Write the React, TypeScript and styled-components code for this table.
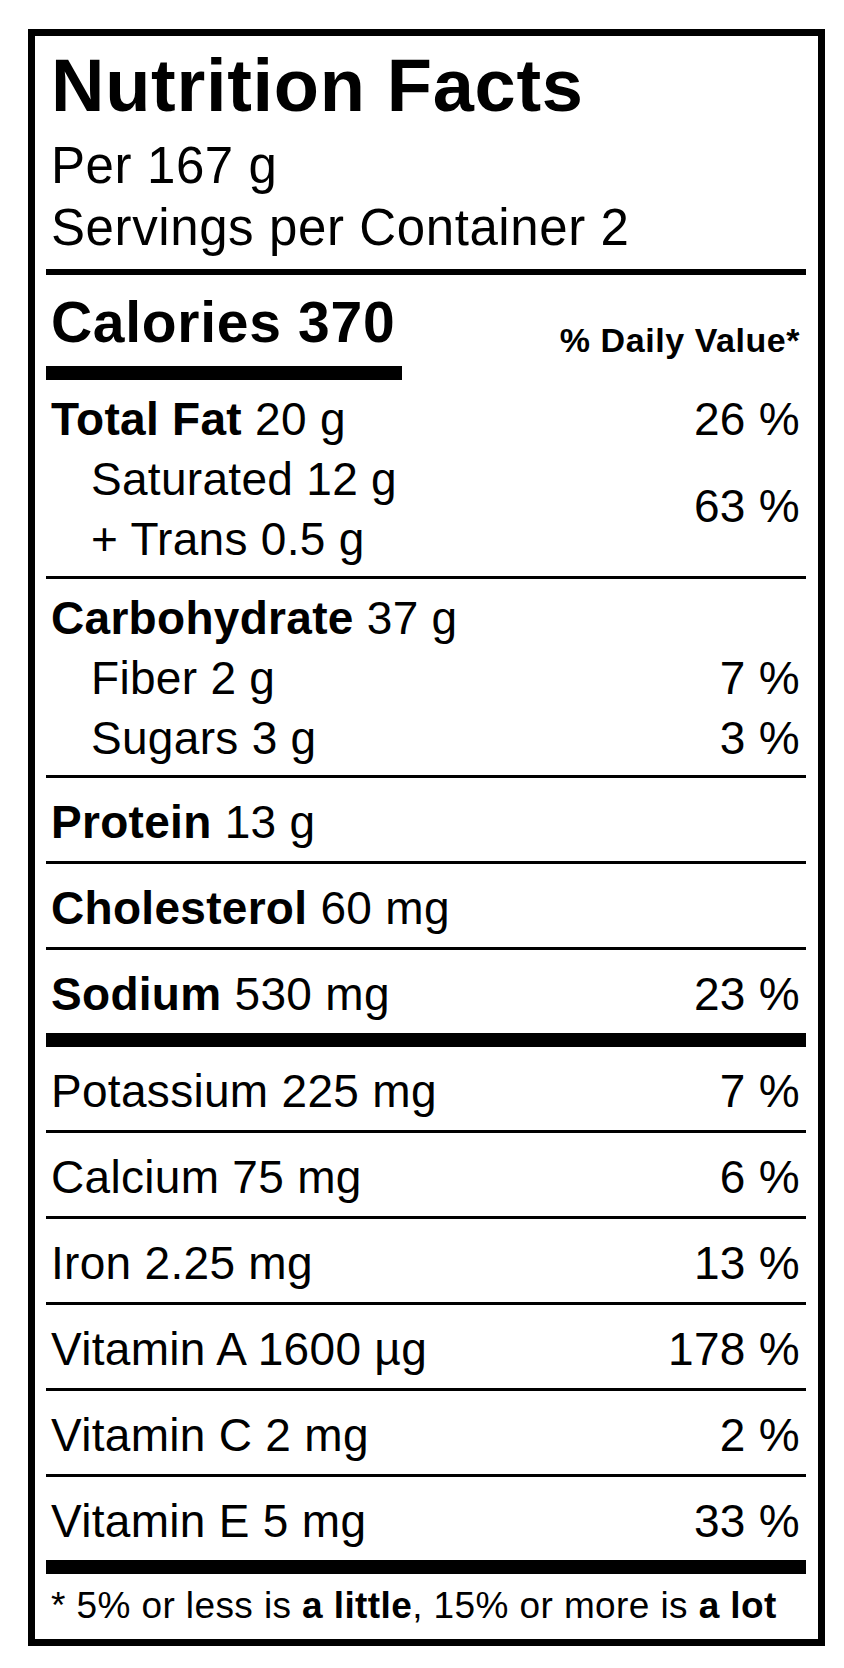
import React from "react";
import styled, { createGlobalStyle } from "styled-components";

const GlobalStyle = createGlobalStyle`
  html, body { margin: 0; padding: 0; background: #fff; }
  body {
    font-family: "Liberation Sans", Arial, Helvetica, sans-serif;
    color: #000;
  }
`;

const Page = styled.div`
  padding: 29px 0 22px 28px;
`;

const Label = styled.section`
  box-sizing: border-box;
  width: 797px;
  border: 7px solid #000;
  padding: 0 12px 0 11px;
`;

const Header = styled.header`
  padding: 13px 0 10px 5px;
`;

const Title = styled.h1`
  margin: 0 0 12px;
  font-size: 74px;
  line-height: 74px;
  font-weight: 700;
  letter-spacing: 0.7px;
`;

const HeaderLine = styled.div`
  font-size: 51px;
  line-height: 62px;
  letter-spacing: 0.6px;
`;

const Divider = styled.div<{ $h: number }>`
  height: ${(p) => p.$h}px;
  background: #000;
`;

const CaloriesSection = styled.div`
  display: flex;
  justify-content: space-between;
  align-items: flex-start;
  padding: 15px 6px 0 0;
`;

const CaloriesBlock = styled.div`
  display: flex;
  flex-direction: column;
`;

const CaloriesText = styled.div`
  padding-left: 5px;
  font-size: 57px;
  line-height: 64px;
  font-weight: 700;
  letter-spacing: 0.7px;
`;

const CaloriesBar = styled.div`
  width: 356px;
  height: 14px;
  margin-top: 12px;
  background: #000;
`;

const DailyValue = styled.div`
  margin-top: 33px;
  font-size: 34px;
  line-height: 34px;
  font-weight: 700;
  letter-spacing: 0.55px;
`;

const Group = styled.div<{ $top: number }>`
  display: grid;
  grid-template-columns: 1fr auto;
  grid-auto-rows: 60px;
  padding: ${(p) => p.$top}px 6px 7px 5px;
  font-size: 46px;
  line-height: 60px;
  letter-spacing: 0.3px;
`;

const GroupName = styled.div<{ $indent?: boolean }>`
  grid-column: 1;
  padding-left: ${(p) => (p.$indent ? 40 : 0)}px;
  white-space: nowrap;
`;

const GroupValue = styled.div<{ $span?: number }>`
  grid-column: 2;
  text-align: right;
  white-space: nowrap;
  ${(p) =>
    p.$span
      ? `grid-row: span ${p.$span}; align-self: center; padding-bottom: 6px;`
      : ""}
`;

const Row = styled.div`
  box-sizing: border-box;
  display: flex;
  justify-content: space-between;
  height: 83px;
  padding: 5px 6px 0 5px;
  font-size: 46px;
  line-height: 78px;
  letter-spacing: 0.3px;
  white-space: nowrap;
`;

const Bold = styled.b`
  font-weight: 700;
`;

const Footnote = styled.p`
  margin: 0;
  padding: 10px 0 11px 5px;
  font-size: 37px;
  line-height: 44px;
  letter-spacing: 0.4px;
  white-space: nowrap;
`;

type Nutrient = { name: string; amount: string; dv?: string; bold?: boolean };

const mainRows: Nutrient[] = [
  { name: "Protein", amount: "13 g", bold: true },
  { name: "Cholesterol", amount: "60 mg", bold: true },
  { name: "Sodium", amount: "530 mg", dv: "23 %", bold: true },
];

const minerals: Nutrient[] = [
  { name: "Potassium", amount: "225 mg", dv: "7 %" },
  { name: "Calcium", amount: "75 mg", dv: "6 %" },
  { name: "Iron", amount: "2.25 mg", dv: "13 %" },
  { name: "Vitamin A", amount: "1600 µg", dv: "178 %" },
  { name: "Vitamin C", amount: "2 mg", dv: "2 %" },
  { name: "Vitamin E", amount: "5 mg", dv: "33 %" },
];

const NutrientRow = ({ n }: { n: Nutrient }) => (
  <Row>
    <span>
      {n.bold ? <Bold>{n.name}</Bold> : n.name} {n.amount}
    </span>
    <span>{n.dv ?? ""}</span>
  </Row>
);

export default function App() {
  return (
    <>
      <GlobalStyle />
      <Page>
        <Label>
          <Header>
            <Title>Nutrition Facts</Title>
            <HeaderLine>Per 167 g</HeaderLine>
            <HeaderLine>Servings per Container 2</HeaderLine>
          </Header>
          <Divider $h={6} />
          <CaloriesSection>
            <CaloriesBlock>
              <CaloriesText>Calories 370</CaloriesText>
              <CaloriesBar />
            </CaloriesBlock>
            <DailyValue>% Daily Value*</DailyValue>
          </CaloriesSection>

          <Group $top={9}>
            <GroupName>
              <Bold>Total Fat</Bold> 20 g
            </GroupName>
            <GroupValue>26 %</GroupValue>
            <GroupName $indent>Saturated 12 g</GroupName>
            <GroupValue $span={2}>63 %</GroupValue>
            <GroupName $indent>+ Trans 0.5 g</GroupName>
          </Group>
          <Divider $h={3} />

          <Group $top={9}>
            <GroupName>
              <Bold>Carbohydrate</Bold> 37 g
            </GroupName>
            <GroupValue />
            <GroupName $indent>Fiber 2 g</GroupName>
            <GroupValue>7 %</GroupValue>
            <GroupName $indent>Sugars 3 g</GroupName>
            <GroupValue>3 %</GroupValue>
          </Group>

          {mainRows.map((n) => (
            <React.Fragment key={n.name}>
              <Divider $h={3} />
              <NutrientRow n={n} />
            </React.Fragment>
          ))}
          <Divider $h={14} />
          {minerals.map((n, i) => (
            <React.Fragment key={n.name}>
              {i > 0 && <Divider $h={3} />}
              <NutrientRow n={n} />
            </React.Fragment>
          ))}
          <Divider $h={14} />
          <Footnote>
            * 5% or less is <Bold>a little</Bold>, 15% or more is <Bold>a lot</Bold>
          </Footnote>
        </Label>
      </Page>
    </>
  );
}
